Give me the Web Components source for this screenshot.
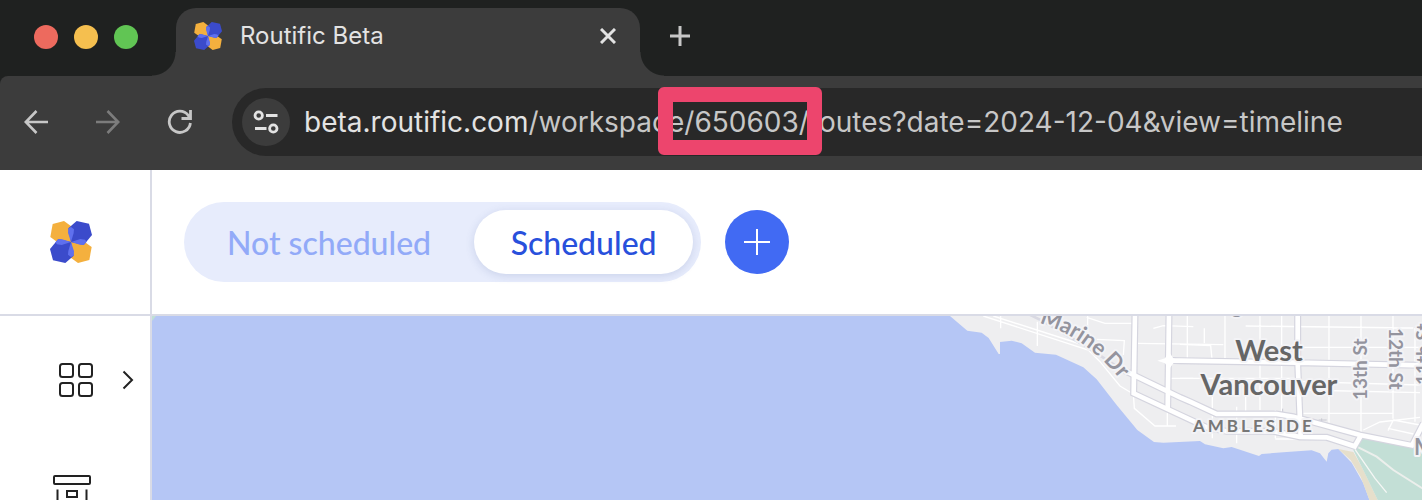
<!DOCTYPE html>
<html lang="en">
<head>
<meta charset="utf-8">
<title>Routific Beta</title>
<style>
  html, body { margin: 0; height: 100%; }
  body { font-family: Inter, "Liberation Sans", sans-serif; background: #fff; overflow: hidden; }
</style>
</head>
<body>
<browser-window>
  <tab-strip slot="tabs"><browser-tab>Routific Beta</browser-tab></tab-strip>
  <address-toolbar slot="toolbar"></address-toolbar>
  <workspace-app>
    <side-nav slot="nav"></side-nav>
    <schedule-header slot="header"></schedule-header>
    <route-map slot="map"></route-map>
  </workspace-app>
</browser-window>

<script>
const define = (name, html) => {
  const template = document.createElement('template');
  template.innerHTML = `<style>:host,*,:host::before,:host::after{box-sizing:border-box} svg{display:block;flex:none} button{border:0;padding:0;background:none;font:inherit;color:inherit;display:grid;place-items:center}</style>${html}`;
  customElements.define(name, class extends HTMLElement {
    constructor() {
      super();
      this.attachShadow({ mode: 'open' }).append(template.content.cloneNode(true));
    }
  });
};

define('browser-window', `
  <style>
    :host { display: grid; grid-template-rows: auto auto minmax(0, 1fr); grid-template-columns: minmax(0, 1fr); height: 100vh; background: #1f2120; }
  </style>
  <slot name="tabs"></slot><slot name="toolbar"></slot><slot></slot>`);

define('brand-mark', `
  <style>:host { display: block; width: 42px; height: 42px; } svg { width: 100%; height: 100%; }</style>
  <svg viewBox="-63 -63 126 126" role="img" aria-label="Routific">
    <g fill="#f4b03e">
      <path d="M-62-15-55-54-21-63 9-41 0 0-30 8Z"/>
      <path d="M62 15 55 54 21 63-9 41 0 0 30-8Z"/>
    </g>
    <g fill="#3b4bcb">
      <path d="M17-63 54-55 63-21 38 9 0 0-8-41Z"/>
      <path d="M-17 63-54 55-63 21-38-9 0 0 8 41Z"/>
    </g>
    <g fill="#5f70ee">
      <path d="M0 0-9-28-8-41 0-45 9-38 8-27Z"/>
      <path d="M0 0 28-9 42-7 47-1 38 9 27 8Z"/>
      <path d="M0 0 9 28 8 41 0 45-9 38-8 27Z"/>
      <path d="M0 0-28 9-42 7-47 1-38-9-27-8Z"/>
    </g>
  </svg>`);

define('tab-strip', `
  <style>
    :host { display: flex; height: 76px; padding: 8px 0 0 34px; align-items: stretch; color: #c7c7c7; }
    .lights { display: flex; gap: 16px; margin-top: 17px; padding-right: 38px; }
    .lights button { width: 24px; height: 24px; border-radius: 50%; }
    .close { background: #ed6a5e; } .min { background: #f5bf4f; } .max { background: #61c554; }
    .new { align-self: flex-start; width: 40px; height: 40px; margin: 8px 0 0 20px; }
  </style>
  <div class="lights">
    <button class="close" aria-label="Close window"></button>
    <button class="min" aria-label="Minimise window"></button>
    <button class="max" aria-label="Zoom window"></button>
  </div>
  <slot></slot>
  <button class="new" aria-label="New tab"><svg width="20" height="20" viewBox="0 0 20 20" stroke="currentColor" stroke-width="3"><path d="M10 0v20M0 10h20"/></svg></button>`);

define('browser-tab', `
  <style>
    :host { display: flex; position: relative; width: 464px; padding: 0 12px 12px 18px; align-items: center; background: #3c3c3c; color: #e3e3e3; border-radius: 20px 20px 0 0; }
    :host::before, :host::after { content: ""; position: absolute; bottom: 0; width: 24px; height: 24px; }
    :host::before { right: 100%; background: radial-gradient(circle at 0 0, #1f2120 23px, #3c3c3c 24px); }
    :host::after { left: 100%; background: radial-gradient(circle at 100% 0, #1f2120 23px, #3c3c3c 24px); }
    brand-mark { width: 28px; height: 28px; margin-right: 18px; }
    .title { flex: 1; font-size: 24px; line-height: 32px; }
    button { width: 40px; height: 40px; }
  </style>
  <brand-mark></brand-mark>
  <span class="title"><slot></slot></span>
  <button aria-label="Close tab"><svg width="16" height="16" viewBox="0 0 16 16" stroke="currentColor" stroke-width="3"><path d="M1 1 15 15M15 1 1 15"/></svg></button>`);

define('address-toolbar', `
  <style>
    :host { display: flex; height: 94px; padding: 12px 0 14px 12px; background: #3c3c3c; border-top-left-radius: 8px; color: #c7c7c7; align-items: center; }
    nav { display: flex; gap: 24px; margin-right: 28px; }
    nav button { width: 48px; height: 48px; }
    nav button:disabled { color: #7c7c7c; }
    form { flex: 1; min-width: 0; display: flex; align-items: center; height: 68px; padding-left: 10px; background: #282828; border-radius: 34px 0 0 34px; }
    .site { flex: none; width: 48px; height: 48px; margin-right: 14px; border-radius: 50%; background: #3c3c3c; color: #e3e3e3; }
    input { field-sizing: content; display: block; height: 40px; margin: 0; padding: 0; border: 0; outline: 0; background: none; font: inherit; font-size: 28px; color: inherit; }
    .host { color: #e3e3e3; }
    .path { position: relative; }
    .mark { position: absolute; left: 130px; top: -15px; width: 164px; height: 68px; border: 15px solid #ed456d; border-radius: 6px; pointer-events: none; }
  </style>
  <nav aria-label="History">
    <button aria-label="Back"><svg width="24" height="24" viewBox="0 0 24 24" fill="none" stroke="currentColor" stroke-width="2.6"><path d="M24 12H2M12.500 1 1.800 12 12.500 23"/></svg></button>
    <button aria-label="Forward" disabled><svg width="24" height="24" viewBox="0 0 24 24" fill="none" stroke="currentColor" stroke-width="2.6"><path d="M0 12H22M11.500 1 22.200 12 11.500 23"/></svg></button>
    <button aria-label="Reload"><svg width="26" height="26" viewBox="0 0 26 26" fill="none" stroke="currentColor" stroke-width="2.800"><path d="M23.400 14A10.600 10.600 0 1 1 21.300 6.400L23 9M23.500 1V9.500H14.500"/></svg></button>
  </nav>
  <form onsubmit="return false">
    <button class="site" type="button" aria-label="View site information"><svg width="26" height="24" viewBox="0 0 26 24" fill="none" stroke="currentColor" stroke-width="2.800"><circle cx="5.700" cy="5.500" r="3.700"/><path d="M13 5.500H24.500M2 18.500H13.500"/><circle cx="20.300" cy="18.500" r="3.700"/></svg></button>
    <input class="host" aria-label="Site" value="beta.routific.com" spellcheck="false">
    <div class="path">
      <input aria-label="Path" value="/workspace/650603/routes?date=2024-12-04&amp;view=timeline" spellcheck="false">
      <div class="mark"></div>
    </div>
  </form>`);

define('workspace-app', `
  <style>
    :host { display: grid; grid-template: 146px minmax(0, 1fr) / 152px minmax(0, 1fr); background: #fff; font-family: Lato, sans-serif; min-height: 0; }
    .logo { display: flex; align-items: center; padding-left: 50px; border: solid #d9dbe6; border-width: 0 2px 2px 0; }
  </style>
  <div class="logo"><brand-mark></brand-mark></div>
  <slot name="header"></slot><slot name="nav"></slot><slot name="map"></slot>`);

define('side-nav', `
  <style>
    :host { display: block; grid-area: 2 / 1; padding-top: 8px; border-right: 2px solid #d9dbe6; color: #222; overflow: hidden; }
    .row { display: flex; height: 112px; align-items: center; justify-content: space-between; padding: 0 16px 0 53px; }
    a { color: inherit; }
  </style>
  <nav aria-label="Workspace">
    <div class="row">
      <a href="#dashboard" aria-label="Dashboard"><svg width="40" height="40" viewBox="0 0 40 40" fill="none" stroke="currentColor" stroke-width="2"><rect x="7" y="4" width="13" height="13" rx="2.500"/><rect x="26" y="4" width="13" height="13" rx="2.500"/><rect x="7" y="23" width="13" height="13" rx="2.500"/><rect x="26" y="23" width="13" height="13" rx="2.500"/></svg></a>
      <button aria-label="Expand menu"><svg width="12" height="20" viewBox="0 0 12 20" fill="none" stroke="currentColor" stroke-width="2"><path d="M1.500 1.500 10 10 1.500 18.500"/></svg></button>
    </div>
    <div class="row">
      <a href="#depots" aria-label="Depots"><svg width="40" height="40" viewBox="0 0 40 40" fill="none" stroke="currentColor" stroke-width="2"><rect x="1" y="4" width="36" height="8" rx="1"/><path d="M4.500 17.500V37H33.500V17.500"/><rect x="14" y="19" width="10" height="6"/></svg></a>
    </div>
  </nav>`);

define('schedule-header', `
  <style>
    :host { display: flex; align-items: center; gap: 24px; padding-left: 32px; border-bottom: 2px solid #d9dbe6; }
    .segments { display: flex; gap: 8px; padding: 8px; border-radius: 40px; background: #e7ecfc; font-size: 32px; font-weight: 500; }
    .segments button { height: 64px; min-width: 219px; padding: 0 35px; border-radius: 32px; color: #92aaf8; }
    .segments button[aria-pressed="true"] { background: #fff; color: #2850dc; box-shadow: 0 2px 8px #5064a030; }
    .add { width: 64px; height: 64px; border-radius: 50%; background: #416af3; color: #fff; }
  </style>
  <div class="segments" role="group" aria-label="Route status">
    <button aria-pressed="false">Not scheduled</button>
    <button aria-pressed="true">Scheduled</button>
  </div>
  <button class="add" aria-label="Add"><svg width="26" height="26" viewBox="0 0 26 26" stroke="currentColor" stroke-width="2"><path d="M13 0v26M0 13h26"/></svg></button>`);

define('route-map', `
  <style>
    :host { display: block; min-width: 0; min-height: 0; overflow: hidden; background: #b5c6f5; }
    svg { width: 100%; height: 100%; }
    text { paint-order: stroke; stroke: #f3f3f6; stroke-width: 4px; stroke-linejoin: round; }
    .place { font: 700 29px Lato, sans-serif; fill: #666; text-anchor: middle; }
    .area { font: 700 17px Lato, sans-serif; fill: #777; letter-spacing: 3px; }
    .street { font: 700 19px Lato, sans-serif; fill: #94949e; }
    .main { font-size: 22px; }
  </style>
  <svg viewBox="152 316 1270 184" preserveAspectRatio="xMinYMin slice" role="img" aria-label="Map of West Vancouver">
    <path fill="#bfe0d5" d="M152 316h4l-4 5z"/>
    <g transform="translate(940 310) scale(.33333)" fill="none">
      <path fill="#eeeef0" d="M30 18 82 62 125 68 146 84 176 132H180V96L215 92 245 100 285 128 348 134 430 172 470 208 530 285 592 360 642 396 670 398 780 393 795 403 850 415 875 411 957 438 965 432 1040 426 1115 421 1140 430 1160 455 1165 430 1175 419 1195 417 1235 458 1270 520 1292 580H1460V10H30Z"/>
      <path fill="#e6dfcb" d="M1195 417 1240 426 1265 470 1318 580H1292L1262 500 1232 450Z"/>
      <path fill="#c3dfd6" d="M1262 383 1240 420 1265 470 1318 580H1460V415Z"/>
      <g stroke="#fff" stroke-width="4">
        <path d="M130 18 445 120 480 155 540 228 580 252M160 18 440 108M182 18V55M292 35V108M440 22 495 40H580M443 18V112M470 88 553 92 550 135M590 100 850 104M640 55 670 47 760 50M580 250 583 295 645 348H708M682 300V348M690 205H760"/>
        <path d="M742 10V146M793 55V100M855 10V146M720 103 812 107 816 148M917 48 1420 54M960 10V300M1025 10V320M1167 10V340M1263 10V370M1359 10V326M817 215V385M890 290V400M720 205H1080M1085 215 1440 225M1085 240 1440 248M1090 310H1360M1006 300V385M1006 387H1160L1240 412M1085 112H1440M1270 360 1320 336 1440 322M1344 362 1360 330 1440 345M1344 355 1420 372M917 240V315M1425 54V335"/>
      </g>
      <path stroke="#c9c9d2" stroke-width="3" d="M1028 307V296M1145 340V325M1136 330H1160"/>
      <path stroke="#d9d9e2" stroke-width="8" d="M265 12 310 34 430 105 540 175"/>
      <g stroke="#d5d5df" stroke-width="21">
        <path d="M585 10 581 250 800 352 860 364H1000L1080 381 1160 382 1244 409 1262 378"/>
        <path d="M687 10 683 300M540 175 720 262 750 275 830 312H1010L1060 320 1260 375 1416 406 1450 340M1073 10V158L1082 380M682 151 720 152 1070 158 1450 166"/>
      </g>
      <g stroke="#fff" stroke-width="14">
        <path d="M585 10 581 250 800 352 860 364H1000L1080 381 1160 382 1244 409 1262 378"/>
        <path d="M687 10 683 300M540 175 720 262 750 275 830 312H1010L1060 320 1260 375 1416 406 1450 340M1073 10V158L1082 380M682 151 720 152 1070 158 1450 166"/>
      </g>
      <path fill="#fff" d="M652 152 675 145 687 125 700 145 720 152 700 160 687 178 675 160Z"/>
      <path stroke="#ecefec" stroke-width="6" d="M1255 412 1310 440 1360 480 1450 537"/>
      <path stroke="#f5f7f5" stroke-width="4" d="M1245 418 1305 505 1340 548"/>
    </g>
    <path id="marine" fill="none" d="M1039 323Q1084 336 1118 377"/>
    <text class="street main"><textPath href="#marine">Marine Dr</textPath></text>
    <text class="street main" x="1231" y="313">g</text>
    <text class="place" x="1269" y="361">West</text>
    <text class="place" x="1269" y="395">Vancouver</text>
    <text class="area" x="1193" y="432">AMBLESIDE</text>
    <text class="street" transform="translate(1367 400) rotate(-90)">13th St</text>
    <text class="street" transform="translate(1389 328) rotate(90)">12th St</text>
    <text class="street" transform="translate(1430 385) rotate(-90)">11th St</text>
    <text class="street main" x="1414" y="455">M</text>
  </svg>`);
</script>
</body>
</html>
